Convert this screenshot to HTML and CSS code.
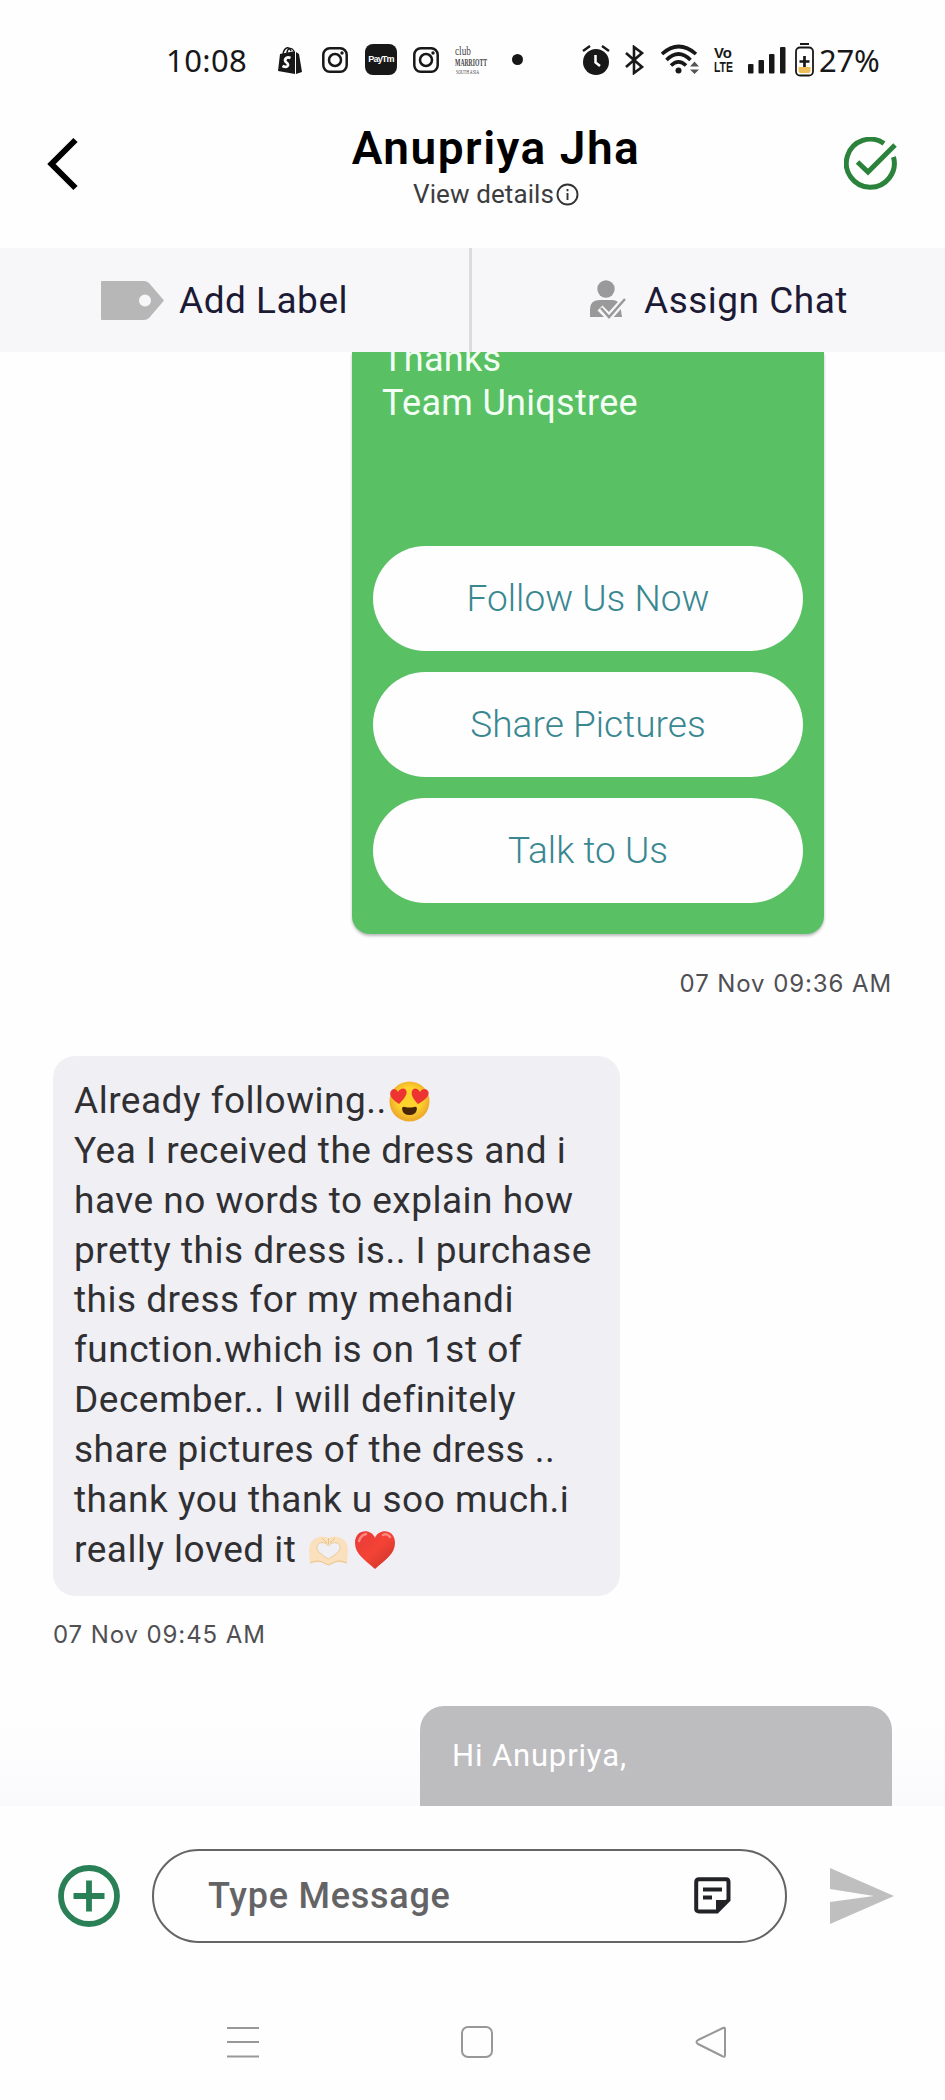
FILE: index.html
```html
<!DOCTYPE html>
<html lang="en">
<head>
<meta charset="utf-8">
<title>Anupriya Jha</title>
<link rel="stylesheet" href="styles.css">
</head>
<body>
<div class="phone">
  <div class="status">
    <span class="clock">10:08</span>
    <div class="notifications">
      <svg class="shop" width="24" height="28" viewBox="0 0 24 28"><path d="M2 8L17 5V28L0 25ZM18 6L21 8L24 26L18 28Z" fill="#181818"/><path d="M5 8C6 2 11-1 13 5M9 7C9 3 13 0 16 5" fill="none" stroke="#181818" stroke-width="1.4"/><path d="M12.500 12C8 10 5.500 14 8.500 16.500C12 19 9 22.500 4.500 20" fill="none" stroke="#fff" stroke-width="2.700"/></svg>
      <svg width="26" height="26" viewBox="0 0 26 26" fill="none" stroke="#181818" stroke-width="2.500"><rect x="1.300" y="1.300" width="23.400" height="23.400" rx="6.500"/><circle cx="13" cy="13" r="6"/><circle cx="20" cy="6" r="1.700" fill="#181818" stroke="none"/></svg>
      <span class="paytm">PayTm</span>
      <svg width="26" height="26" viewBox="0 0 26 26" fill="none" stroke="#181818" stroke-width="2.500"><rect x="1.300" y="1.300" width="23.400" height="23.400" rx="6.500"/><circle cx="13" cy="13" r="6"/><circle cx="20" cy="6" r="1.700" fill="#181818" stroke="none"/></svg>
      <svg class="club" width="40" height="36" viewBox="0 0 40 36"><text class="club-a" x="0" y="13" textLength="16" lengthAdjust="spacingAndGlyphs">club</text><text class="club-b" x="0" y="24" textLength="32" lengthAdjust="spacingAndGlyphs">MARRIOTT</text><text class="club-c" x="1" y="32" textLength="23" lengthAdjust="spacingAndGlyphs">SOUTH ASIA</text></svg>
      <span class="dot"></span>
    </div>
    <div class="indicators">
      <svg width="28" height="30" viewBox="0 0 28 30"><circle cx="14" cy="17" r="13" fill="#181818"/><path d="M1 6L8 1M27 6L20 1" stroke="#181818" stroke-width="2.400"/><path d="M13.500 10V17.500L18 21" fill="none" stroke="#fff" stroke-width="2.500"/></svg>
      <svg class="bt" width="20" height="30" viewBox="0 0 20 30" fill="none" stroke="#181818" stroke-width="2.600"><path d="M1 8L17 22L9 28V2L17 8L1 22"/></svg>
      <svg class="wifi" width="40" height="31" viewBox="0 0 40 31" fill="none" stroke="#181818" stroke-width="3.600"><path d="M1 10Q17.500-5 35 10M5.500 16Q17.500 4 29.500 16M10 21.500Q17.500 14 25 21.500"/><circle cx="17.500" cy="26.500" r="3" fill="#181818" stroke="none"/><path d="M29 22.500L33.500 17.500L38 22.500ZM29 25.500L33.500 30L38 25.500Z" fill="#555" stroke="none"/></svg>
      <svg class="volte" width="24" height="34" viewBox="0 0 24 34"><text x="1" y="14.500" textLength="18" lengthAdjust="spacingAndGlyphs">Vo</text><text x="1" y="29" textLength="19" lengthAdjust="spacingAndGlyphs">LTE</text></svg>
      <svg class="signal" width="38" height="28" viewBox="0 0 38 28" fill="#181818"><rect x="0" y="18" width="5.500" height="9.500" rx="1"/><rect x="10.500" y="14" width="5.500" height="13.500" rx="1"/><rect x="21" y="8" width="5.500" height="19.500" rx="1"/><rect x="32" y="1" width="5.500" height="26.500" rx="1"/></svg>
      <svg class="battery" width="19" height="34" viewBox="0 0 19 34"><path d="M5 1H14" stroke="#181818" stroke-width="2"/><rect x="1" y="4.500" width="17" height="28" rx="4" fill="none" stroke="#181818" stroke-width="1.800"/><path d="M3.500 24H15.500V28Q15.500 30 13.500 30H5.500Q3.500 30 3.500 28Z" fill="#efbd59"/><path d="M9.500 13V24M4.500 18.500H14.500" stroke="#181818" stroke-width="2.700"/></svg>
      <span class="percent">27%</span>
    </div>
  </div>

  <header class="header">
    <svg width="32" height="54" viewBox="0 0 32 54" fill="none" stroke="#000" stroke-width="6"><path d="M28.500 3L4.500 27L28.500 51"/></svg>
    <div class="contact">
      <h1 class="name">Anupriya Jha</h1>
      <div class="details"><span>View details</span><svg width="23" height="23" viewBox="0 0 23 23" fill="none" stroke="#333" stroke-width="1.900"><circle cx="11.500" cy="11.500" r="10"/><path d="M11.500 10V17M11.500 6V8.200"/></svg></div>
    </div>
    <svg width="54" height="54" viewBox="0 0 54 54" fill="none" stroke="#2b823b" stroke-width="5"><path d="M40 6.500A24 24 0 1 0 49.500 20"/><path d="M13.500 25L24 35L51 8"/></svg>
  </header>

  <div class="actions">
    <div class="action action-label"><svg width="64" height="39" viewBox="0 0 64 39"><path fill="#b7b7b7" fill-rule="evenodd" d="M0 1Q0 0 1 0H43Q46 0 48 2L63 19.500L48 37Q46 39 43 39H1Q0 39 0 38ZM44 13.500A6 6 0 1 0 44 25.500A6 6 0 1 0 44 13.500Z"/></svg><span class="label-text">Add Label</span></div>
    <div class="action action-assign"><svg width="38" height="41" viewBox="0 0 38 41"><circle cx="17" cy="9" r="8.700" fill="#999"/><path d="M1 37V29Q1 20 11 20H23Q28 20 31 24L33 37Z" fill="#999"/><path d="M11 28L20 37L37 18" fill="none" stroke="#f7f7f9" stroke-width="7"/><path d="M12 28L20 37L36 19" fill="none" stroke="#999" stroke-width="2.500"/></svg><span class="assign-text">Assign Chat</span></div>
  </div>

  <main class="chat">
    <section class="sent">
      <p class="signature"><span class="thanks">Thanks</span><br><span class="team">Team Uniqstree</span></p>
      <div class="replies">
        <div class="reply follow">Follow Us Now</div>
        <div class="reply share">Share Pictures</div>
        <div class="reply talk">Talk to Us</div>
      </div>
    </section>
    <time class="time time-sent">07 Nov 09:36 AM</time>
    <section class="received">
      Already following..<svg class="emoji love" role="img" aria-label="Smiling face with heart eyes" width="41" height="41" viewBox="0 0 41 41"><defs><radialGradient id="face" cy=".45"><stop offset=".6" stop-color="#fdd32e"/><stop offset="1" stop-color="#efac2b"/></radialGradient></defs><circle cx="20.500" cy="20.500" r="20" fill="url(#face)"/><path d="M10 23C4 19 0 15 1.500 11C3 7 7 7 9 11C11 7 16 6 17.500 10C18.500 14 14 19 10 23Z" fill="#ed3430"/><path d="M29 23C25 19 21.500 14 23 10C24.500 6 29 7 31 11C33 7 38 7 39.500 11C40.500 15 36 19 29 23Z" fill="#ed3430"/><path d="M13 28Q13 25 16 26Q20.500 27 25 26Q28 25 28 28Q27 34 20.500 34Q14 34 13 28Z" fill="#482507"/></svg><br>
      Yea I received the dress and i<br>
      have no words to explain how<br>
      pretty this dress is.. I purchase<br>
      this dress for my mehandi<br>
      function.which is on 1st of<br>
      December.. I will definitely<br>
      share pictures of the dress ..<br>
      thank you thank u soo much.i<br>
      really loved it <svg class="emoji hands" role="img" aria-label="Heart hands" width="41" height="31" viewBox="0 0 41 31"><path d="M2 28L1 16Q1 6 8 3Q15 0 20.500 3Q26 0 33 3Q40 6 40 16L39 28L26 27L20.500 30L15 27Z" fill="#fae0bc"/><path d="M20.500 24C14 20 8 16 9 11C11 6 18 7 20.500 11C23 7 30 6 32 11C33 16 27 20 20.500 24Z" fill="#f0eff4" stroke="#eacb96"/><path d="M2 28Q10 24 16 28L20.500 30L25 28Q31 24 39 28M20.500 3V9M14 3L19 8M27 3L22 8" fill="none" stroke="#e7c48b"/></svg><svg class="emoji heart" role="img" aria-label="Red heart" width="42" height="38" viewBox="0 0 42 38"><defs><linearGradient id="heart" x2="1" y2="1"><stop offset="0" stop-color="#e63b38"/><stop offset=".5" stop-color="#f44336"/><stop offset="1" stop-color="#c33329"/></linearGradient></defs><path d="M21 38C11 29 1 23 1 12C1-2 17-3 21 7C25-3 41-2 41 12C41 23 31 29 21 38Z" fill="url(#heart)"/><path d="M5 10Q7 4 12 3M29 4Q33 2 36 6" fill="none" stroke="#ff8780" stroke-width="2.500" stroke-linecap="round"/></svg>
    </section>
    <time class="time">07 Nov 09:45 AM</time>
    <section class="pending"><span class="hi">Hi Anupriya,</span></section>
  </main>

  <footer class="composer">
    <svg width="62" height="62" viewBox="0 0 62 62" fill="none" stroke="#2a8056" stroke-width="5.800"><circle cx="31" cy="31" r="28"/><path d="M31 15.500V46.500M15.500 31H46.500"/></svg>
    <div class="input"><span class="placeholder">Type Message</span><svg width="37" height="37" viewBox="0 0 37 37"><path d="M5 2.200H32Q34.500 2.200 34.500 5V23L23 34.500H5Q2.200 34.500 2.200 32V5Q2.200 2.200 5 2.200Z" fill="none" stroke="#222327" stroke-width="4"/><path d="M22 35V23H35Z" fill="#222327"/><path d="M9 12.500H28M9 20.500H18" stroke="#222327" stroke-width="4"/></svg></div>
    <svg class="send" width="64" height="56" viewBox="0 0 64 56"><path d="M0 0L64 28L0 56V34L44 28L0 21Z" fill="#bfbfc0"/></svg>
  </footer>
  <nav class="system">
    <svg width="32" height="34" viewBox="0 0 32 34" stroke="#98989a" stroke-width="2.200"><path d="M0 3H32M0 17H32M0 31.500H32"/></svg>
    <svg width="34" height="34" viewBox="0 0 34 34" fill="none" stroke="#98989a" stroke-width="2"><rect x="2" y="2" width="30" height="30" rx="6"/></svg>
    <svg width="34" height="34" viewBox="0 0 34 34" fill="none" stroke="#98989a" stroke-width="2" stroke-linejoin="round"><path d="M29 3Q31 2 31 4V30Q31 33 28 31L4 19Q1 17 4 15Z"/></svg>
  </nav>
</div>
</body>
</html>
```
FILE: styles.css
```css
* { box-sizing: border-box; }
body { margin: 0; background: #fefefe; font-family: Roboto, sans-serif; }
svg { display: block; flex: none; }
.phone { width: 945px; height: 2100px; display: flex; flex-direction: column; overflow: hidden; white-space: nowrap; }
.status { height: 119px; padding-left: 166px; display: flex; align-items: center; color: #181818; }
.clock { width: 112px; font: 31px "Noto Sans", sans-serif; letter-spacing: .4px; }
.notifications { display: flex; align-items: center; }
.shop { margin-right: 20px; }
.paytm { width: 32px; height: 31px; margin: 0 16px 0 17px; border-radius: 8px; background: #181818; color: #fff; font: bold 9px/31px "Liberation Sans", sans-serif; text-align: center; letter-spacing: -.8px; }
.club { margin-left: 16px; }
.club text { fill: #444; font-family: "Liberation Serif", serif; }
.club .club-a { font-size: 13px; }
.club .club-b { font-size: 10.500px; font-weight: bold; }
.club .club-c { font-size: 6px; }
.dot { width: 11px; height: 11px; margin-left: 17px; border-radius: 50%; background: #181818; }
.indicators { display: flex; align-items: center; margin-left: 59px; }
.bt { margin-left: 15px; }
.wifi { margin-left: 16px; }
.volte { margin-left: 12px; }
.volte text { font: bold 15px "Liberation Sans", sans-serif; fill: #181818; }
.signal { margin-left: 11px; }
.battery { margin: 0 5px 0 9px; }
.percent { font: 31px "Noto Sans", sans-serif; letter-spacing: -.2px; }

.header { height: 129px; padding: 17px 47px 0 47px; display: flex; justify-content: space-between; align-items: flex-start; }
.contact { width: 300px; display: flex; flex-direction: column; align-items: center; margin-left: 69px; }
.header > svg { margin-top: 1px; }
.name { margin: -15px 0 0; font-size: 46px; line-height: 54px; font-weight: 600; letter-spacing: 1.500px; color: #000; }
.details { display: flex; align-items: center; gap: 2px; font-size: 26px; line-height: 36px; color: #3c3c3e; margin-top: 1px; letter-spacing: .1px; }

.actions { height: 104px; display: flex; background: #f7f7f9; color: #1d1a35; font-size: 37px; letter-spacing: .5px; }
.action { display: flex; align-items: center; flex: 1; }
.action-label { flex: 0 0 472px; border-right: 3px solid #dcdcde; padding-left: 101px; gap: 14px; }
.action-assign { padding-left: 117px; gap: 17px; }

.chat { height: 1454px; overflow: hidden; padding: 0 53px; display: flex; flex-direction: column; align-items: flex-start; background: linear-gradient(#fefefe 94%, #fafafd); }
.sent { width: 472px; height: 582px; flex: none; margin-left: 299px; padding: 0 21px 31px; display: flex; flex-direction: column; justify-content: space-between; background: #59c164; border-radius: 0 0 18px 18px; box-shadow: 0 2px 3px #0004; }
.signature { margin: -15px 0 0 9px; font-size: 36px; line-height: 44px; color: #f3fff4; letter-spacing: .3px; }
.replies { display: grid; gap: 21px; }
.reply { height: 105px; border-radius: 53px; background: #fefefe; color: #398791; font-size: 37px; font-weight: 300; line-height: 106px; text-align: center; letter-spacing: .05px; }
.time { font: 24px/32px Inter, sans-serif; letter-spacing: .9px; color: #505054; }
.time-sent { align-self: flex-end; margin-top: 34px; }
.received { width: 567px; height: 540px; flex: none; margin: 56px 0 23px; padding: 20px 21px; border-radius: 22px; background: #f0eff4; color: #303033; font-size: 37px; line-height: 49.850px; letter-spacing: .5px; }
.emoji { display: inline-block; vertical-align: -7px; }
.love { margin: -6px 0 -6px 2px; vertical-align: -6px; position: relative; top: -3px; }
.hands { margin-left: 2px; vertical-align: -4px; }
.heart { margin: 0 0 0 5px; }
.pending { width: 472px; height: 140px; flex: none; align-self: flex-end; margin-top: 55px; padding: 30px 32px; border-radius: 24px 24px 0 0; background: #bdbcbf; color: #fff; font-size: 31px; line-height: 40px; letter-spacing: .85px; }

.composer { height: 179px; display: flex; align-items: center; padding-left: 58px; }
.input { width: 635px; height: 94px; margin: 0 43px 0 32px; padding: 0 54px; border: 2px solid #646466; border-radius: 47px; display: flex; align-items: center; justify-content: space-between; color: #646466; font-size: 36px; font-weight: 500; letter-spacing: .75px; }
.system { height: 114px; display: flex; align-items: center; padding: 0 217px 0 227px; justify-content: space-between; }
```
